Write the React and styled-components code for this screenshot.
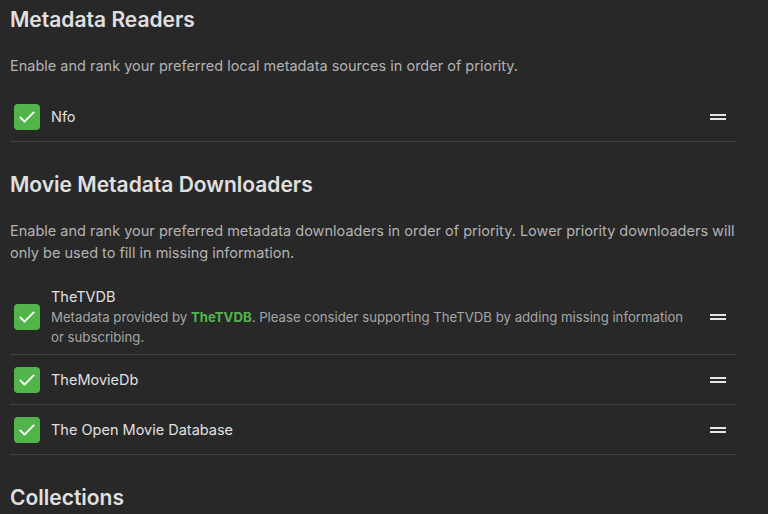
import React from 'react';
import styled, { createGlobalStyle } from 'styled-components';

const Global = createGlobalStyle`
  html, body {
    margin: 0;
    padding: 0;
    background: #282829;
  }
  body {
    font-family: Inter, "Noto Sans", sans-serif;
    color: #dddddd;
    -webkit-font-smoothing: antialiased;
  }
`

const Page = styled.div`
  padding: 7px 31px 0 10px;
  height: 514px;
  box-sizing: border-box;
  overflow: hidden;
`

const Section = styled.section`
  margin-bottom: 30px;
`

const Heading = styled.h2`
  margin: 0 0 23px;
  font-size: 21px;
  line-height: 25px;
  font-weight: 600;
  color: #e0e0e0;
`

const Description = styled.p`
  margin: 0 0 15px;
  font-size: 14.5px;
  line-height: 22px;
  color: #b3b3b3;
`

const List = styled.div`
  display: flex;
  flex-direction: column;
`

const Row = styled.div`
  display: flex;
  align-items: center;
  gap: 11px;
  min-height: 50px;
  padding: ${p => (p.$tall ? '8px 0 7px 4px' : '0 0 0 4px')};
  box-sizing: border-box;
  border-bottom: 1px solid #424243;
`

const Check = styled.div`
  flex: 0 0 26px;
  width: 26px;
  height: 26px;
  border-radius: 4px;
  background: #52b54b;
  display: flex;
  align-items: center;
  justify-content: center;
`

const Body = styled.div`
  flex: 1;
  min-width: 0;
`

const Title = styled.div`
  font-size: 14.5px;
  line-height: 20px;
  color: #e0e0e0;
`

const Note = styled.div`
  font-size: 13.2px;
  line-height: 20px;
  color: #a6a6a6;
  padding-right: 4px;
`

const Link = styled.span`
  color: #52b54b;
  font-weight: 700;
`

const Handle = styled.div`
  flex: 0 0 16px;
  width: 16px;
  height: 6px;
  margin-right: 11px;
  border-top: 2px solid #e6e6e6;
  border-bottom: 2px solid #e6e6e6;
  box-sizing: border-box;
`

const Tick = () => (
  <svg width="20" height="20" viewBox="0 0 24 24" fill="none" stroke="#fff" strokeWidth="2.3" strokeLinecap="round" strokeLinejoin="round">
    <path d="M4 12.5l5 5L20 6.5" />
  </svg>
)

const Item = ({ title, note, tall }) => (
  <Row $tall={tall}>
    <Check><Tick /></Check>
    <Body>
      <Title>{title}</Title>
      {note && <Note>{note}</Note>}
    </Body>
    <Handle />
  </Row>
)

export default function App() {
  return (
    <Page>
      <Global />
      <Section>
        <Heading>Metadata Readers</Heading>
        <Description>Enable and rank your preferred local metadata sources in order of priority.</Description>
        <List>
          <Item title="Nfo" />
        </List>
      </Section>
      <Section>
        <Heading>Movie Metadata Downloaders</Heading>
        <Description>
          Enable and rank your preferred metadata downloaders in order of priority. Lower priority downloaders will only be used to fill in missing information.
        </Description>
        <List>
          <Item
            tall
            title="TheTVDB"
            note={<>Metadata provided by <Link>TheTVDB</Link>. Please consider supporting TheTVDB by adding missing information or subscribing.</>}
          />
          <Item title="TheMovieDb" />
          <Item title="The Open Movie Database" />
        </List>
      </Section>
      <Section>
        <Heading>Collections</Heading>
      </Section>
    </Page>
  );
}
